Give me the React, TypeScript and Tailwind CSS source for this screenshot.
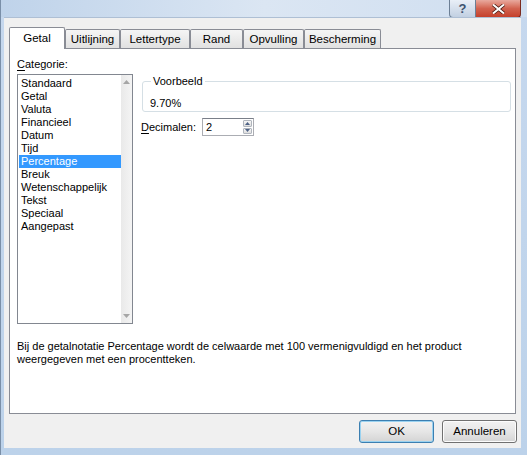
import type { ReactNode } from 'react';

const categories = [
  'Standaard',
  'Getal',
  'Valuta',
  'Financieel',
  'Datum',
  'Tijd',
  'Percentage',
  'Breuk',
  'Wetenschappelijk',
  'Tekst',
  'Speciaal',
  'Aangepast',
];

const tabs = [
  { label: 'Getal', w: 'w-[56px]' },
  { label: 'Uitlijning', w: 'w-[55px]' },
  { label: 'Lettertype', w: 'w-[70px]' },
  { label: 'Rand', w: 'w-[53px]' },
  { label: 'Opvulling', w: 'w-[61px]' },
  { label: 'Bescherming', w: 'w-[77px]' },
];

function Underlined({ first, rest }: { first: string; rest: string }) {
  return (
    <span>
      <span className="underline underline-offset-2">{first}</span>
      {rest}
    </span>
  );
}

function Arrow({ dir }: { dir: 'up' | 'down' }) {
  return (
    <svg width="7" height="4" viewBox="0 0 7 4" className="block">
      {dir === 'up' ? (
        <path d="M0 4 L3.5 0 L7 4 Z" fill="#a6a6a6" />
      ) : (
        <path d="M0 0 L3.5 4 L7 0 Z" fill="#a6a6a6" />
      )}
    </svg>
  );
}

function DialogButton({ children, primary }: { children: ReactNode; primary?: boolean }) {
  return (
    <button
      type="button"
      className={`w-[75px] h-[23px] rounded-[3px] border text-[11.5px] text-black bg-gradient-to-b from-[#f2f2f2] via-[#e6e6e6] to-[#d4d4d4] ${
        primary
          ? 'border-[#3c7fb1] shadow-[inset_0_0_0_1px_#9ad2f0]'
          : 'border-[#707070] shadow-[inset_0_0_0_1px_#fcfcfc]'
      }`}
    >
      {children}
    </button>
  );
}

export default function App() {
  return (
    <div className="w-[527px] h-[455px] flex flex-col bg-gradient-to-b from-[#c6d8ee] to-[#bcd2ea] border-l border-[#7a8fa8] font-['Liberation_Sans',Arial,sans-serif] text-black overflow-hidden">
      {/* title bar */}
      <div className="h-[17px] flex justify-end pr-[6px] bg-gradient-to-r from-[#bfd3ea] via-[#dbe6f3] to-[#cfdef0]">
        <div className="w-[27px] h-[18px] rounded-bl-[4px] border border-t-0 border-[#6c7f95] bg-gradient-to-b from-[#e9eff7] to-[#c2d0e2] flex items-center justify-center text-[13px] font-bold text-[#3e5370] leading-none">
          ?
        </div>
        <div className="w-[45px] h-[18px] rounded-br-[4px] border border-l-0 border-t-0 border-[#7a2b20] bg-gradient-to-b from-[#e8a99e] via-[#d2624f] to-[#c4402b] flex items-center justify-center">
          <svg width="13" height="10" viewBox="0 0 13 10">
            <path d="M1 0.5 L12 9.5 M12 0.5 L1 9.5" stroke="#4a1a12" strokeWidth="3.4" />
            <path d="M1 0.5 L12 9.5 M12 0.5 L1 9.5" stroke="#ffffff" strokeWidth="2" />
          </svg>
        </div>
      </div>

      {/* client area */}
      <div className="flex-1 ml-[3px] mr-[6px] mb-[7px] bg-[#f0f0f0] border-t border-[#aebfd4] pl-[5px] pr-[4px] pt-[8px] flex flex-col">
        {/* tab strip */}
        <div className="flex items-end h-[22px] text-[11.5px]">
          {tabs.map((t, i) =>
            i === 0 ? (
              <div
                key={t.label}
                className={`${t.w} h-[22px] -mb-px relative z-10 bg-white border border-b-0 border-[#898c95] rounded-t-[2px] flex items-center justify-center`}
              >
                {t.label}
              </div>
            ) : (
              <div
                key={t.label}
                className={`${t.w} h-[19px] border border-b-0 border-[#898c95] rounded-t-[2px] bg-gradient-to-b from-[#f5f5f5] to-[#e1e1e1] flex items-center justify-center pt-[1px]`}
              >
                {t.label}
              </div>
            ),
          )}
        </div>

        {/* tab page */}
        <div className="w-[507px] h-[366px] bg-white border border-[#898c95] flex flex-col text-[11px] leading-[13px]">
          <div className="flex pl-[7px] pt-[9px] pr-[4px]">
            <div className="flex flex-col w-[116px]">
              <div className="h-[15px] mb-[1px]">
                <Underlined first="C" rest="ategorie:" />
              </div>
              <div className="h-[250px] border border-[#828790] flex">
                <ul className="flex-1 pt-[2px] pl-[1px]">
                  {categories.map((c) => (
                    <li
                      key={c}
                      className={`h-[13px] pl-[2px] leading-[13px] ${
                        c === 'Percentage' ? 'bg-[#3399ff] text-white' : ''
                      }`}
                    >
                      {c}
                    </li>
                  ))}
                </ul>
                <div className="w-[11px] bg-gradient-to-r from-[#e9e9e9] to-[#f4f4f4] flex flex-col justify-between items-center py-[5px]">
                  <Arrow dir="up" />
                  <Arrow dir="down" />
                </div>
              </div>
            </div>

            <div className="flex-1 ml-[9px] pt-[17px] flex flex-col">
              <fieldset className="border border-[#d5dfe5] rounded-[3px] h-[37px] pl-[7px] pt-[9px] pr-[2px]">
                <legend className="px-[2px] ml-[1px] leading-[13px]">Voorbeeld</legend>
                <div className="leading-[13px]">9.70%</div>
              </fieldset>
              <div className="flex items-center mt-[6px] -ml-[1px]">
                <span className="w-[61px]">
                  <Underlined first="D" rest="ecimalen:" />
                </span>
                <div className="w-[52px] h-[18px] border border-[#abadb3] border-t-[#7a7f89] flex bg-white">
                  <span className="flex-1 pl-[3px] leading-[16px]">2</span>
                  <div className="w-[9px] my-[1px] mr-[1px] flex flex-col gap-px">
                    <div className="flex-1 border border-[#b0b5bd] rounded-[1px] bg-gradient-to-b from-[#f6f6f6] to-[#dedede] flex items-center justify-center">
                      <svg width="5" height="3" viewBox="0 0 5 3"><path d="M0 3 L2.5 0 L5 3 Z" fill="#4d6185" /></svg>
                    </div>
                    <div className="flex-1 border border-[#b0b5bd] rounded-[1px] bg-gradient-to-b from-[#f6f6f6] to-[#dedede] flex items-center justify-center">
                      <svg width="5" height="3" viewBox="0 0 5 3"><path d="M0 0 L2.5 3 L5 0 Z" fill="#4d6185" /></svg>
                    </div>
                  </div>
                </div>
              </div>
            </div>
          </div>

          <p className="pl-[7px] pt-[16px] leading-[13px]">
            Bij de getalnotatie Percentage wordt de celwaarde met 100 vermenigvuldigd en het product
            <br />
            weergegeven met een procentteken.
          </p>
        </div>

        {/* buttons */}
        <div className="flex justify-end gap-[8px] mt-[6px]">
          <DialogButton primary>OK</DialogButton>
          <DialogButton>Annuleren</DialogButton>
        </div>
      </div>
    </div>
  );
}
